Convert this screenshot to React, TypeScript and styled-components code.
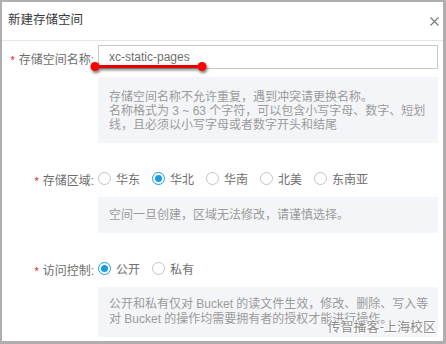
import React from "react";
import styled, { createGlobalStyle } from "styled-components";

const Global = createGlobalStyle`
  html, body { margin: 0; padding: 0; background: #fff; }
  body { font-family: "Liberation Sans", "Noto Sans CJK SC", sans-serif; }
  * { box-sizing: border-box; }
`;

const Frame = styled.div`
  position: relative;
  width: 446px;
  height: 344px;
  border-style: solid;
  border-color: #b1acad;
  border-width: 2px 3px 3px 2px;
  background: #fff;
  overflow: hidden;
`;

const Header = styled.div`
  height: 39px;
  border-bottom: 1px solid #e6e6e6;
  display: flex;
  align-items: center;
  justify-content: space-between;
  padding: 0 4px 3px 6px;
`;

const Title = styled.div`
  font-size: 12.5px;
  line-height: 14px;
  color: #3a3a3a;
`;

const CloseIcon = styled.svg`
  width: 9px;
  height: 9px;
  margin-top: 3px;
`;

const Body = styled.div`
  padding: 4px 5px 0 6px;
`;

const FormItem = styled.div<{ $gap?: number }>`
  display: grid;
  grid-template-columns: 90px 1fr;
  margin-top: ${(p) => p.$gap ?? 0}px;
`;

const Label = styled.label<{ $h: number }>`
  height: ${(p) => p.$h}px;
  display: flex;
  align-items: center;
  justify-content: flex-end;
  padding-right: 4px;
  padding-top: 2px;
  font-size: 12px;
  color: #6e6e6e;
  white-space: nowrap;
`;

const Star = styled.span`
  color: #f0141e;
  font-size: 11px;
  margin-right: 4px;
  position: relative;
  top: 2px;
`;

const Input = styled.div`
  height: 24px;
  border: 1px solid #c9c9c9;
  padding-left: 10px;
  display: flex;
  align-items: center;
  font-size: 12px;
  color: #6e6e6e;
`;

const Help = styled.div<{ $lh: number; $pad: string; $mt: number }>`
  grid-column: 2;
  margin-top: ${(p) => p.$mt}px;
  background: #f4f5f8;
  padding: ${(p) => p.$pad};
  font-size: 12px;
  line-height: ${(p) => p.$lh}px;
  color: #9b9b9b;
  white-space: nowrap;
`;

const RadioGroup = styled.div`
  height: 20px;
  display: flex;
  align-items: center;
`;

const RadioItem = styled.label`
  display: flex;
  align-items: center;
  margin-right: 12px;
  font-size: 12px;
  color: #6e6e6e;
`;

const Circle = styled.span<{ $on?: boolean }>`
  width: 13px;
  height: 13px;
  border-radius: 50%;
  border: 1px solid ${(p) => (p.$on ? "#1a9de0" : "#c4c4c4")};
  display: flex;
  align-items: center;
  justify-content: center;
  margin-right: 5px;
  margin-top: 1px;
  &::after {
    content: "";
    width: 7px;
    height: 7px;
    border-radius: 50%;
    background: #1a9de0;
    display: ${(p) => (p.$on ? "block" : "none")};
  }
`;

const Annotation = styled.svg`
  position: absolute;
  left: 84px;
  top: 54px;
  width: 126px;
  height: 22px;
  overflow: visible;
`;

const Watermark = styled.div`
  position: absolute;
  right: 7px;
  bottom: 8px;
  font-family: "Noto Sans CJK SC", sans-serif;
  font-size: 13px;
  line-height: 15px;
  color: #8c8c8c;
  text-shadow: 1px 0 #fff, -1px 0 #fff, 0 1px #fff, 0 -1px #fff;
`;

function Radio({ label, on }: { label: string; on?: boolean }) {
  return (
    <RadioItem>
      <Circle $on={on} />
      {label}
    </RadioItem>
  );
}

export default function App() {
  return (
    <>
      <Global />
      <Frame>
        <Header>
          <Title>新建存储空间</Title>
          <CloseIcon viewBox="0 0 9 9">
            <path d="M0.5 0.5 L8.5 8.5 M8.5 0.5 L0.5 8.5" stroke="#777" strokeWidth="1.1" />
          </CloseIcon>
        </Header>
        <Body>
          <FormItem>
            <Label $h={24}>
              <Star>*</Star>存储空间名称:
            </Label>
            <Input>xc-static-pages</Input>
            <Help $lh={14} $pad="13px 10px 11px 11px" $mt={8}>
              存储空间名称不允许重复，遇到冲突请更换名称。
              <br />
              名称格式为 3 ~ 63 个字符，可以包含小写字母、数字、短划
              <br />
              线，且必须以小写字母或者数字开头和结尾
            </Help>
          </FormItem>
          <FormItem $gap={25}>
            <Label $h={20}>
              <Star>*</Star>存储区域:
            </Label>
            <RadioGroup>
              <Radio label="华东" />
              <Radio label="华北" on />
              <Radio label="华南" />
              <Radio label="北美" />
              <Radio label="东南亚" />
            </RadioGroup>
            <Help $lh={14} $pad="11px 10px 11px 11px" $mt={9}>
              空间一旦创建，区域无法修改，请谨慎选择。
            </Help>
          </FormItem>
          <FormItem $gap={25}>
            <Label $h={20}>
              <Star>*</Star>访问控制:
            </Label>
            <RadioGroup>
              <Radio label="公开" on />
              <Radio label="私有" />
            </RadioGroup>
            <Help $lh={15} $pad="10px 10px 10px 11px" $mt={9}>
              公开和私有仅对 Bucket 的读文件生效，修改、删除、写入等
              <br />
              对 Bucket 的操作均需要拥有者的授权才能进行操作。
            </Help>
          </FormItem>
        </Body>
        <Annotation viewBox="0 0 126 22">
          <defs>
            <filter id="sh" x="-20%" y="-100%" width="140%" height="300%">
              <feDropShadow dx="1" dy="2" stdDeviation="1.5" floodColor="#000" floodOpacity="0.55" />
            </filter>
          </defs>
          <g filter="url(#sh)">
            <line x1="9" y1="10.5" x2="116" y2="10.5" stroke="#e80000" strokeWidth="3" />
            <circle cx="9" cy="10.5" r="4.5" fill="#f00" />
            <circle cx="116" cy="10.5" r="4.5" fill="#f00" />
          </g>
        </Annotation>
        <Watermark>传智播客-上海校区</Watermark>
      </Frame>
    </>
  );
}
